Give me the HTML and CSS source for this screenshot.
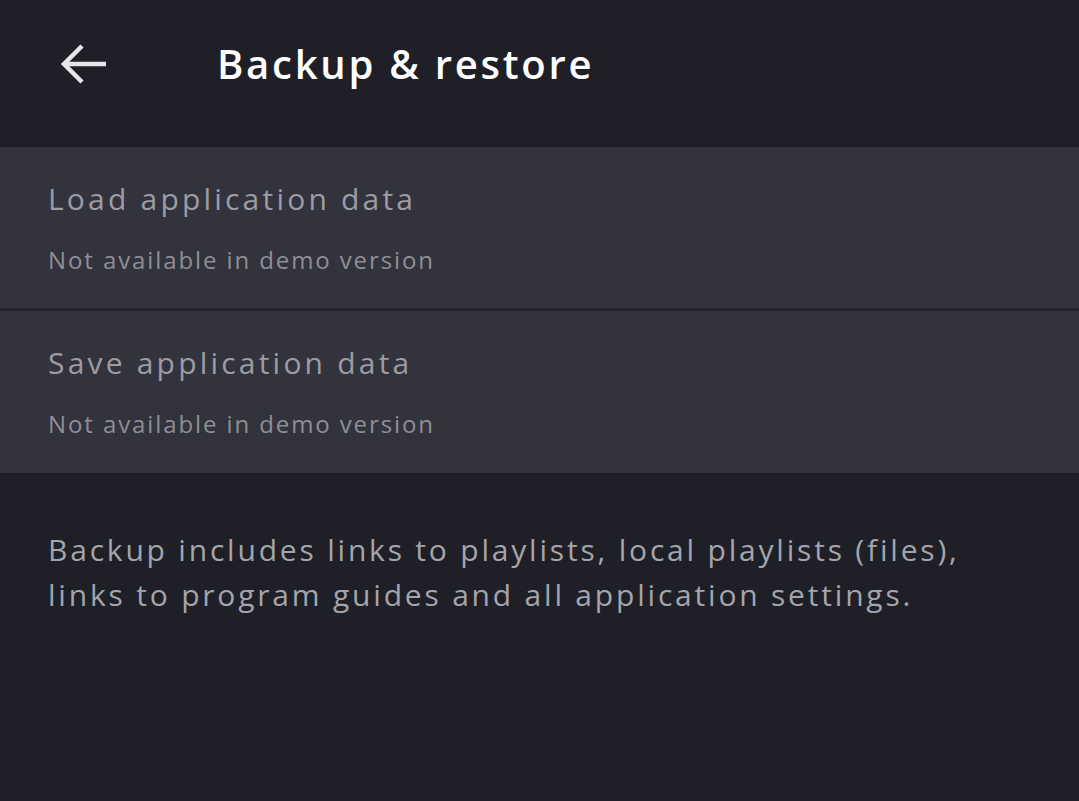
FILE: index.html
```html
<!DOCTYPE html>
<html>
<head>
<meta charset="utf-8">
<link rel="stylesheet" href="styles.css">
</head>
<body>
<div class="app">
  <header class="toolbar">
    <div class="back">
      <svg width="48" height="44" viewBox="0 0 48 44"><path d="M46 22H6M22 4L4 22l18 18" fill="none" stroke="#e6e6e8" stroke-width="4.5"/></svg>
    </div>
    <h1 class="title">Backup &amp; restore</h1>
  </header>
  <section class="list">
    <div class="item">
      <div class="item-title">Load application data</div>
      <div class="item-sub">Not available in demo version</div>
    </div>
    <div class="item">
      <div class="item-title">Save application data</div>
      <div class="item-sub">Not available in demo version</div>
    </div>
  </section>
  <p class="note">Backup includes links to playlists, local playlists (files), links to program guides and all application settings.</p>
</div>
</body>
</html>
```
FILE: styles.css
```css
html, body {
  margin: 0;
  padding: 0;
  background: #1f1f27;
}
.app {
  width: 1079px;
  height: 801px;
  background: #1f1f27;
  font-family: "Open Sans", sans-serif;
  overflow: hidden;
}
.toolbar {
  height: 147px;
  display: flex;
  align-items: center;
  padding-left: 60px;
  box-sizing: border-box;
  padding-bottom: 20px;
}
.back {
  width: 48px;
  height: 44px;
  display: flex;
}
.title {
  margin: 0 0 0 109px;
  color: #ffffff;
  font-size: 40px;
  font-weight: 600;
  letter-spacing: 2.75px;
}
.list {
  display: flex;
  flex-direction: column;
  gap: 3px;
  background: #23232b;
}
.item {
  background: #33333d;
  height: 161px;
  box-sizing: border-box;
  padding: 32px 48px 0;
}
.item:last-child {
  height: 162px;
}
.item-title {
  color: #9c9ca2;
  font-size: 30px;
  letter-spacing: 3.2px;
  line-height: 40px;
}
.item-sub {
  color: #8e8e95;
  font-size: 24px;
  letter-spacing: 1.9px;
  line-height: 30px;
  margin-top: 26px;
}
.note {
  margin: 54px 48px 0;
  color: #a4a4aa;
  font-size: 30px;
  letter-spacing: 2.8px;
  line-height: 45px;
  width: 980px;
}
```
